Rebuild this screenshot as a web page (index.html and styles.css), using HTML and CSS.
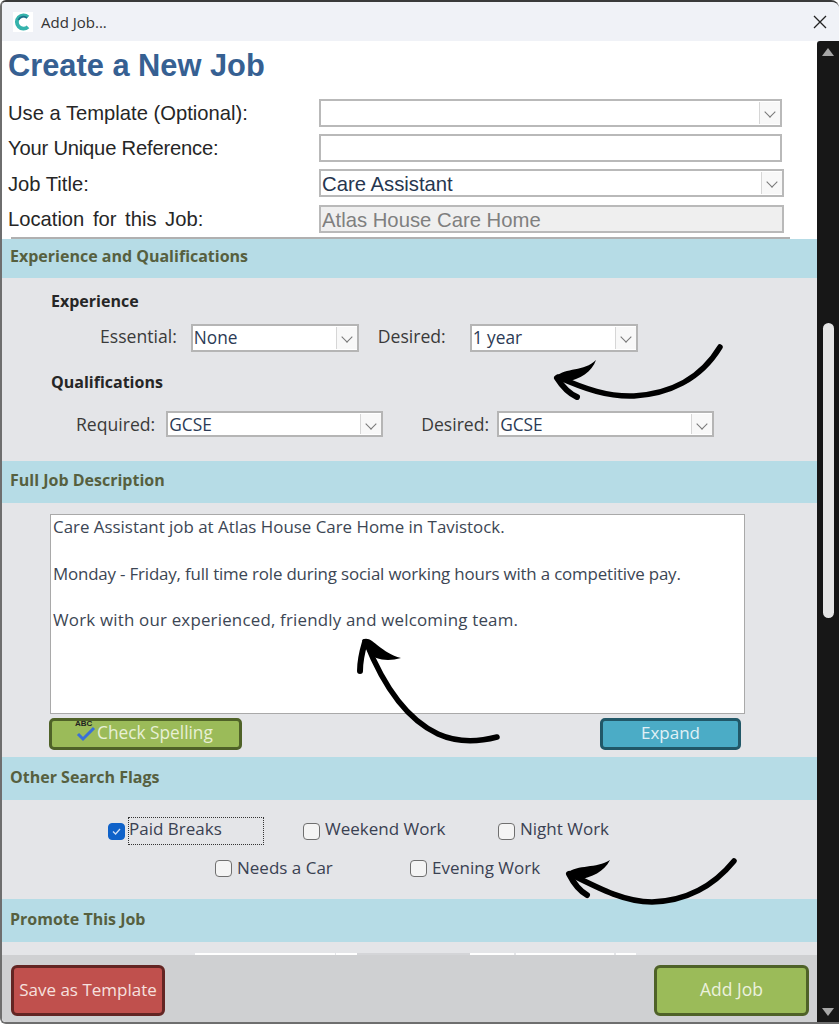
FILE: index.html
```html
<!DOCTYPE html>
<html lang="en">
<head>
  <meta charset="UTF-8">
  <title>Add Job...</title>
  <link rel="stylesheet" href="styles.css">
</head>
<body>
  <div class="window">
    <div class="titlebar">
      <div class="logo">
        <svg width="20" height="20" viewBox="0 0 20 20"><path d="M15 5.2A6.6 6.6 0 1 0 15 14.8" fill="none" stroke="#35b3ac" stroke-width="3.8"/><path d="M14 6A5.4 5.4 0 0 0 5.4 8" fill="none" stroke="#1d6f8a" stroke-width="1.8"/></svg>
      </div>
      <span class="title-text">Add Job...</span>
      <svg class="close" width="14" height="14" viewBox="0 0 14 14"><path d="M1 1L13 13M13 1L1 13" stroke="#222" stroke-width="1.3"/></svg>
    </div>
    <div class="body-row">
      <div class="content">
        <div class="form-top">
          <h1>Create a New Job</h1>
          <div class="field-row">
            <label>Use a Template (Optional):</label>
            <div class="box box-template"><span class="chev"></span></div>
          </div>
          <div class="field-row">
            <label class="label-ref">Your Unique Reference:</label>
            <div class="box box-template"></div>
          </div>
          <div class="field-row">
            <label>Job Title:</label>
            <div class="box box-wide">Care Assistant<span class="chev"></span></div>
          </div>
          <div class="field-row">
            <label class="label-loc">Location for this Job:</label>
            <div class="box box-wide box-locked">Atlas House Care Home</div>
          </div>
          <div class="top-rule"></div>
        </div>

        <div class="band band-first">Experience and Qualifications</div>
        <div class="panel panel-exp">
          <div class="sub-head">Experience</div>
          <div class="pick-row pick-exp">
            <span class="pick-label label-essential">Essential:</span>
            <div class="pick pick-short">None<span class="chev"></span></div>
            <span class="pick-label label-desired">Desired:</span>
            <div class="pick pick-short">1 year<span class="chev"></span></div>
          </div>
          <div class="sub-head sub-qual">Qualifications</div>
          <div class="pick-row pick-qual">
            <span class="pick-label label-required">Required:</span>
            <div class="pick pick-long">GCSE<span class="chev"></span></div>
            <span class="pick-label label-desired2">Desired:</span>
            <div class="pick pick-long">GCSE<span class="chev"></span></div>
          </div>
        </div>

        <div class="band">Full Job Description</div>
        <div class="panel panel-desc">
          <div class="desc-box">
            <p>Care Assistant job at Atlas House Care Home in Tavistock.</p>
            <p class="line-tight">Monday - Friday, full time role during social working hours with a competitive pay.</p>
            <p class="line-wide">Work with our experienced, friendly and welcoming team.</p>
          </div>
          <div class="desc-actions">
            <button class="btn btn-spell">
              <span class="spell-icon">
                <span class="spell-abc">ABC</span>
                <svg width="22" height="16" viewBox="0 0 22 16"><path d="M4 8L9 13L20 2" fill="none" stroke="#3a6fd8" stroke-width="3"/></svg>
              </span>
              Check Spelling
            </button>
            <button class="btn btn-expand">Expand</button>
          </div>
        </div>

        <div class="band band-tall">Other Search Flags</div>
        <div class="panel panel-flags">
          <div class="flag-row flag-row-1">
            <div class="flag flag-paid">
              <span class="check check-on">
                <svg width="11" height="11" viewBox="0 0 11 11"><path d="M2 5.5L4.6 8L9 3" fill="none" stroke="#cfe0f7" stroke-width="1.3"/></svg>
              </span>
              <span class="flag-focus">Paid Breaks</span>
            </div>
            <div class="flag flag-weekend"><span class="check"></span>Weekend Work</div>
            <div class="flag flag-night"><span class="check"></span>Night Work</div>
          </div>
          <div class="flag-row flag-row-2">
            <div class="flag flag-car"><span class="check"></span>Needs a Car</div>
            <div class="flag flag-evening"><span class="check"></span>Evening Work</div>
          </div>
        </div>

        <div class="band band-tall">Promote This Job</div>
        <div class="panel panel-promote">
          <div class="stub stub-a"></div>
          <div class="stub stub-b"></div>
          <div class="stub stub-line"></div>
          <div class="stub stub-c"></div>
          <div class="stub stub-d"></div>
          <div class="stub stub-e"></div>
        </div>

        <div class="footer">
          <button class="btn btn-save">Save as Template</button>
          <button class="btn btn-add">Add Job</button>
        </div>
      </div>
      <div class="scrollbar">
        <span class="arrow-up"></span>
        <span class="thumb"></span>
        <span class="arrow-down"></span>
      </div>
    </div>
  </div>

  <!-- hand drawn arrows sit on top of the form -->
  <svg class="scribble" width="839" height="1024" viewBox="0 0 839 1024">
    <g fill="none" stroke="#000" stroke-linecap="round">
      <path d="M720 347C700 380 668 394 634 396C608 397 585 389 558 377" stroke-width="5.5"/>
      <path d="M557 378C562 386 568 393 577 397" stroke-width="6"/>
      <path d="M734 861C712 888 684 901 652 902C625 902 600 889 570 874" stroke-width="5.5"/>
      <path d="M569 874C574 884 580 891 587 895" stroke-width="6"/>
      <path d="M497 737C478 742 458 743 438 734C408 720 385 690 366 642" stroke-width="5.5"/>
      <path d="M365 642C362 652 360 661 360 671" stroke-width="6"/>
    </g>
    <path d="M555 377C566 367 584 372 596 360C592 372 580 379 566 382Z"/>
    <path d="M567 873C578 864 596 869 610 860C604 872 592 877 578 880Z"/>
    <path d="M362 640C372 634 378 652 401 658C388 662 374 660 368 652Z"/>
  </svg>
</body>
</html>
```

FILE: styles.css
```css
* {
  box-sizing: border-box;
}
html, body {
  margin: 0;
  height: 1024px;
  overflow: hidden;
  background: #fff;
}
body {
  position: relative;
  font-family: "Open Sans", Arial, sans-serif;
  color: #404040;
}
.window {
  height: 1024px;
  display: flex;
  flex-direction: column;
  border: 2px solid #6e6e6e;
  border-top: 2px solid #3a3a3a;
  border-right: 0;
  border-top-left-radius: 6px;
  border-top-right-radius: 8px;
  border-bottom-left-radius: 6px;
  overflow: hidden;
  background: #f0f2f7;
}
.titlebar {
  height: 39px;
  flex: none;
  display: flex;
  align-items: center;
  padding: 0 12px 0 11px;
  background: #f0f2f7;
}
.logo {
  width: 20px;
  height: 20px;
  background: #fff;
}
.title-text {
  margin-left: 8px;
  font-size: 15px;
  color: #333;
}
.close {
  margin-left: auto;
}
.body-row {
  flex: 1;
  display: flex;
  min-height: 0;
}
.content {
  flex: 1;
  min-width: 0;
  display: flex;
  flex-direction: column;
  background: #fff;
}

/* top white part */
.form-top {
  height: 198px;
  flex: none;
  padding-left: 6px;
  background: #fff;
  font-family: "Liberation Sans", Arial, sans-serif;
}
h1 {
  margin: 0;
  height: 54px;
  padding-top: 7px;
  font-size: 30.8px;
  font-weight: 700;
  line-height: 36px;
  color: #366092;
}
.field-row {
  display: flex;
  align-items: center;
  height: 35.3px;
}
.field-row label {
  width: 311px;
  padding-top: 2px;
  font-size: 20.2px;
  color: #262626;
}
.field-row .label-ref {
  letter-spacing: -0.2px;
}
.field-row .label-loc {
  word-spacing: 3px;
}
.box {
  position: relative;
  height: 28px;
  border: 2px solid #b9b9b9;
  background: #fff;
  font-size: 20.3px;
  line-height: 27px;
  padding-left: 1px;
  color: #26364f;
}
.box-template {
  width: 463px;
}
.box-wide {
  width: 465px;
}
.box-locked {
  background: #efefef;
  color: #7f7f7f;
}
.top-rule {
  width: 779px;
  height: 2px;
  margin: 1px 0 0 3px;
  background: #b0b0b0;
}

/* chevron drop button */
.chev {
  position: absolute;
  right: 0;
  top: 1px;
  bottom: 1px;
  width: 21px;
  background: #f8f8f8;
  border-left: 1px solid #d6d6d6;
}
.chev::after {
  content: "";
  position: absolute;
  left: 6px;
  top: 6px;
  width: 7px;
  height: 7px;
  border-right: 1px solid #777;
  border-bottom: 1px solid #777;
  transform: rotate(45deg);
}

/* blue section bands */
.band {
  height: 42px;
  flex: none;
  padding: 8px 0 0 8px;
  background: #b6dce6;
  font-size: 16px;
  font-weight: 700;
  line-height: 22px;
  color: #56603f;
}
.band-first {
  height: 39px;
  padding-top: 6px;
}
.band-tall {
  height: 43px;
  padding-top: 9px;
}
.panel {
  flex: none;
  background: #e4e5e8;
}
.panel-exp {
  height: 183px;
  padding: 12px 0 0 49px;
}
.sub-head {
  font-size: 16px;
  font-weight: 700;
  line-height: 22px;
  color: #262626;
}
.sub-qual {
  margin-top: 19px;
}
.pick-row {
  display: flex;
  align-items: center;
}
.pick-exp {
  margin-top: 12px;
}
.pick-qual {
  margin-top: 18px;
}
.pick-label {
  font-size: 17.6px;
  font-weight: 500;
  color: #3a3a3a;
  line-height: 20px;
  position: relative;
  top: -2px;
}
.pick-qual .pick-label {
  top: 0;
}
.label-essential {
  margin: 0 14px 0 49px;
}
.label-desired {
  margin: 0 24px 0 19px;
}
.label-required {
  margin: 0 11px 0 25px;
}
.label-desired2 {
  margin: 0 8px 0 38px;
}
.pick {
  position: relative;
  background: #fff;
  border: 2px solid #b5b5b5;
  font-size: 17.3px;
  padding-left: 1px;
  color: #2b3a55;
}
.pick-short {
  width: 168px;
  height: 28px;
  line-height: 24px;
}
.pick-long {
  width: 217px;
  height: 26px;
  line-height: 23px;
}
.panel-desc {
  height: 254px;
  padding: 11px 0 0 48px;
}
.desc-box {
  width: 695px;
  height: 200px;
  background: #fff;
  border: 1px solid #a9a9a9;
  padding: 0 2px;
  font-size: 16.9px;
  line-height: 23.3px;
  color: #3c4654;
}
.desc-box p {
  margin: 0 0 23.3px;
}
.desc-box .line-tight {
  letter-spacing: -0.17px;
}
.desc-box .line-wide {
  letter-spacing: 0.2px;
}
.desc-actions {
  display: flex;
  justify-content: space-between;
  width: 692px;
  margin: 4px 0 0 -1px;
}
.btn {
  display: block;
  font-family: inherit;
  font-size: 17px;
  border-radius: 5px;
  padding: 0 0 3px;
}
.btn-spell {
  width: 193px;
  height: 32px;
  background: #9bbb59;
  border: 3px solid #4f6228;
  color: #e8f0d6;
  font-size: 17.3px;
  display: flex;
  align-items: center;
  padding-left: 22px;
  gap: 1px;
}
.spell-icon {
  position: relative;
  width: 22px;
  height: 16px;
}
.spell-icon svg {
  position: absolute;
  left: 0;
  top: 1px;
}
.spell-abc {
  position: absolute;
  left: 1px;
  top: -6px;
  font-family: "Liberation Sans", Arial, sans-serif;
  font-size: 8px;
  font-weight: 700;
  color: #222;
}
.btn-expand {
  width: 141px;
  height: 32px;
  background: #4bacc6;
  border: 3px solid #215868;
  color: #e1f1f6;
}

/* search flags */
.panel-flags {
  height: 99px;
}
.flag-row {
  position: relative;
  display: flex;
  font-size: 17px;
  line-height: 22px;
  color: #3a4152;
}
.flag-row-1 {
  height: 28px;
  margin-top: 17px;
}
.flag-row-2 {
  height: 22px;
  margin-top: 12px;
}
.flag {
  display: flex;
  align-items: flex-start;
}
.check {
  width: 17px;
  height: 17px;
  flex: none;
  margin: 6px 5px 0 0;
  border: 1px solid #6f6f6f;
  border-radius: 4px;
  background: #f4f4f4;
}
.check-on {
  display: flex;
  align-items: center;
  justify-content: center;
  background: #0f62c9;
  border-color: #0f62c9;
}
.flag-focus {
  width: 136px;
  height: 28px;
  margin-left: -2px;
  border: 1px dotted #333;
  line-height: 22px;
}
.flag-paid {
  margin-left: 106px;
  width: 195px;
}
.flag-weekend {
  width: 195px;
}
.flag-weekend .check, .flag-night .check {
  margin-top: 5px;
}
.flag-car {
  margin-left: 213px;
  width: 195px;
}
.flag-car .check, .flag-evening .check {
  margin-top: 3px;
}
.flag-weekend, .flag-night {
  padding-top: 1px;
}
.panel-promote {
  height: 13px;
  position: relative;
  display: flex;
  align-items: flex-end;
}
.stub {
  height: 2px;
  background: #fff;
}
.stub-a {
  margin-left: 193px;
  width: 140px;
}
.stub-b {
  margin-left: 1px;
  width: 21px;
}
.stub-line {
  width: 113px;
  background: #d4d5d8;
}
.stub-c {
  width: 44px;
}
.stub-d {
  margin-left: 2px;
  width: 98px;
}
.stub-e {
  margin-left: 2px;
  width: 20px;
}
.footer {
  flex: 1;
  display: flex;
  justify-content: space-between;
  align-items: flex-start;
  padding: 10px 8px 0 9px;
  background: #cfd0d2;
}
.btn-save {
  width: 154px;
  height: 51px;
  background: #c0504d;
  border: 3px solid #632523;
  color: #f6e0df;
  font-size: 17px;
  border-radius: 6px;
}
.btn-add {
  width: 155px;
  height: 51px;
  background: #9bbb59;
  border: 3px solid #4f6228;
  color: #ebf1de;
  font-size: 17.5px;
  border-radius: 6px;
}

/* scrollbar */
.scrollbar {
  width: 22px;
  flex: none;
  display: flex;
  flex-direction: column;
  align-items: center;
  background: #171717;
  padding-top: 7px;
  border-top-left-radius: 3px;
}
.arrow-up {
  width: 0;
  height: 0;
  border-left: 6px solid transparent;
  border-right: 6px solid transparent;
  border-bottom: 8px solid #a8a8a8;
}
.thumb {
  width: 11px;
  height: 295px;
  margin-top: 267px;
  border-radius: 6px;
  background: #e6e6e6;
}
.arrow-down {
  width: 0;
  height: 0;
  margin-top: auto;
  margin-bottom: 6px;
  border-left: 6px solid transparent;
  border-right: 6px solid transparent;
  border-top: 8px solid #a8a8a8;
}
.scribble {
  position: absolute;
  left: 0;
  top: 0;
  pointer-events: none;
}
```
